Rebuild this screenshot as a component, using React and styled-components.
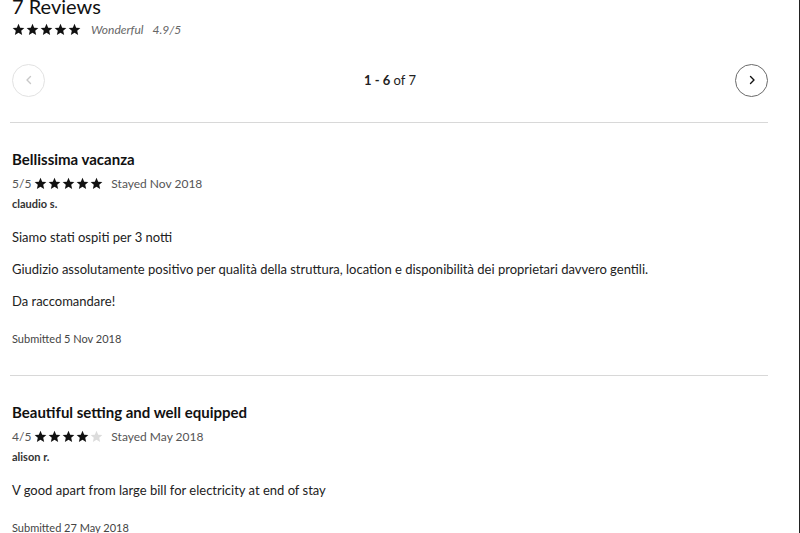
import React from "react";
import styled, { createGlobalStyle } from "styled-components";

const Global = createGlobalStyle`
  html, body { margin: 0; padding: 0; background: #fff; }
  body { font-family: Lato, "Open Sans", Arial, sans-serif; color: #222; overflow: hidden; }
`;

const Page = styled.div`
  height: 533px;
  overflow: hidden;
  padding: 0 31px 0 12px;
  box-sizing: border-box;
  border-right: 1px solid #222;
`;

const Heading = styled.h1`
  margin: -6px 0 0;
  font-size: 20px;
  line-height: 24px;
  font-weight: 400;
  color: #111;
`;

const SummaryRow = styled.div`
  display: flex;
  align-items: center;
  height: 14px;
  margin-top: 4px;
`;

const Stars = styled.span`
  display: inline-flex;
  gap: 1px;
  margin: 0 ${(p) => p.$gapRight || 4}px 0 ${(p) => p.$gapLeft || 0}px;
`;

const Italic = styled.span`
  font-style: italic;
  font-size: 12px;
  color: #666;
  margin-left: 6px;
  & + & { margin-left: 9px; }
`;

const Pager = styled.div`
  display: flex;
  align-items: center;
  justify-content: space-between;
  margin-top: 28px;
  height: 32px;
`;

const CircleButton = styled.button`
  width: 33px;
  height: 33px;
  border-radius: 50%;
  background: #fff;
  border: 1px solid ${(p) => (p.$disabled ? "#e2e2e2" : "#6a6a6a")};
  color: ${(p) => (p.$disabled ? "#c8c8c8" : "#111")};
  display: flex;
  align-items: center;
  justify-content: center;
  padding: 0;
  cursor: pointer;
`;

const PageText = styled.div`
  font-size: 13px;
  color: #222;
  b { font-weight: 700; }
`;

const Divider = styled.hr`
  border: 0;
  border-top: 1px solid #d8d8d8;
  margin: ${(p) => p.$top}px 0 0 -2px;
`;

const Review = styled.section`
  padding-top: 26px;
`;

const Title = styled.h2`
  margin: 0;
  font-size: 15px;
  line-height: 20px;
  font-weight: 700;
  color: #111;
`;

const MetaRow = styled.div`
  display: flex;
  align-items: center;
  margin-top: 6px;
  height: 16px;
  font-size: 12px;
  color: #555;
`;

const Author = styled.div`
  margin-top: 6px;
  font-size: 11px;
  line-height: 14px;
  font-weight: 700;
  color: #333;
`;

const Body = styled.div`
  margin-top: 17px;
  display: flex;
  flex-direction: column;
  gap: 14px;
`;

const Para = styled.p`
  margin: 0;
  font-size: 13px;
  line-height: 18px;
  color: #222;
`;

const Submitted = styled.div`
  margin-top: 22px;
  font-size: 11px;
  line-height: 14px;
  color: #444;
`;

const Star = ({ filled = true, size = 13 }) => (
  <svg width={size} height={size} viewBox="0 0 24 24">
    <path
      d="M12 1.5l3.1 7.1 7.7.7-5.8 5.1 1.7 7.6L12 18l-6.7 4 1.7-7.6-5.8-5.1 7.7-.7z"
      fill={filled ? "#111" : "#dcdcdc"}
    />
  </svg>
);

const StarRow = ({ count, ...rest }) => (
  <Stars {...rest}>
    {[0, 1, 2, 3, 4].map((i) => (
      <Star key={i} filled={i < count} />
    ))}
  </Stars>
);

const Chevron = ({ dir }) => (
  <svg width="10" height="10" viewBox="0 0 10 10" fill="none">
    <path
      d={dir === "left" ? "M6.5 1.5L3 5l3.5 3.5" : "M3.5 1.5L7 5 3.5 8.5"}
      stroke="currentColor"
      strokeWidth="1.4"
      strokeLinecap="round"
      strokeLinejoin="round"
    />
  </svg>
);

const reviews = [
  {
    title: "Bellissima vacanza",
    rating: 5,
    stayed: "Stayed Nov 2018",
    author: "claudio s.",
    body: [
      "Siamo stati ospiti per 3 notti",
      "Giudizio assolutamente positivo per qualità della struttura, location e disponibilità dei proprietari davvero gentili.",
      "Da raccomandare!",
    ],
    submitted: "Submitted 5 Nov 2018",
  },
  {
    title: "Beautiful setting and well equipped",
    rating: 4,
    stayed: "Stayed May 2018",
    author: "alison r.",
    body: ["V good apart from large bill for electricity at end of stay"],
    submitted: "Submitted 27 May 2018",
  },
];

export default function App() {
  return (
    <>
      <Global />
      <Page>
        <Heading>7 Reviews</Heading>
        <SummaryRow>
          <StarRow count={5} $gapRight={4} />
          <Italic>Wonderful</Italic>
          <Italic>4.9/5</Italic>
        </SummaryRow>
        <Pager>
          <CircleButton $disabled aria-label="Previous">
            <Chevron dir="left" />
          </CircleButton>
          <PageText>
            <b>1 - 6</b> of 7
          </PageText>
          <CircleButton aria-label="Next">
            <Chevron dir="right" />
          </CircleButton>
        </Pager>
        <Divider $top={26} />
        {reviews.map((r, idx) => (
          <React.Fragment key={idx}>
            <Review>
              <Title>{r.title}</Title>
              <MetaRow>
                {r.rating}/5
                <StarRow count={r.rating} $gapLeft={3} $gapRight={8} />
                {r.stayed}
              </MetaRow>
              <Author>{r.author}</Author>
              <Body>
                {r.body.map((p, i) => (
                  <Para key={i}>{p}</Para>
                ))}
              </Body>
              <Submitted>{r.submitted}</Submitted>
            </Review>
            <Divider $top={29} />
          </React.Fragment>
        ))}
      </Page>
    </>
  );
}
